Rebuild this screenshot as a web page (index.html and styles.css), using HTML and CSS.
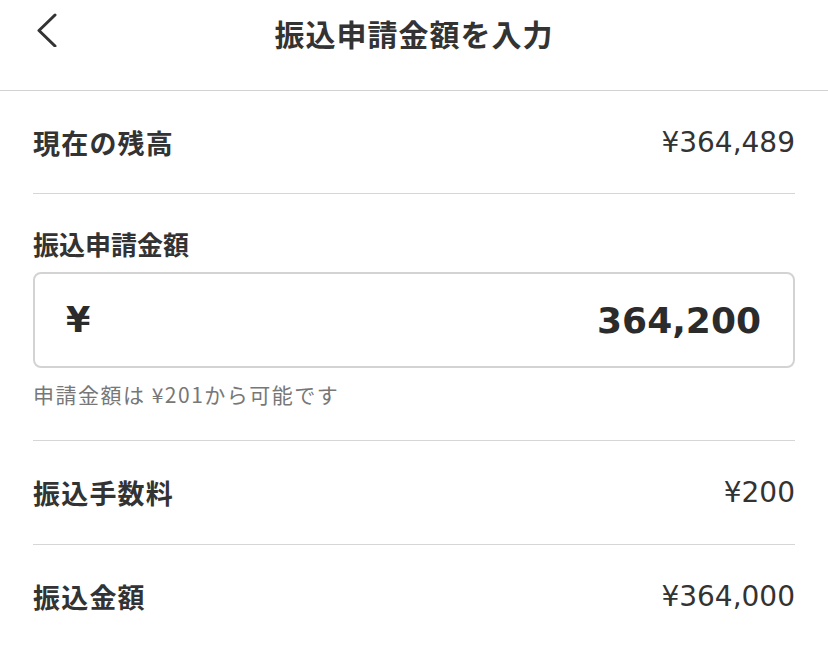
FILE: index.html
```html
<!DOCTYPE html>
<html lang="ja">
<head>
<meta charset="utf-8">
<title>振込申請金額を入力</title>
<link rel="stylesheet" href="styles.css">
</head>
<body>
<header class="topbar">
  <div class="back">
    <svg class="back-icon" width="24" height="34" viewBox="0 0 24 34" aria-hidden="true">
      <polyline points="20,2 4,17.5 20,33" fill="none" stroke="#333" stroke-width="3" stroke-linecap="round" stroke-linejoin="round"/>
    </svg>
  </div>
  <h1 class="title">振込申請金額を入力</h1>
  <div class="spacer"></div>
</header>
<main class="content">
  <div class="row">
    <span class="row-label">現在の残高</span>
    <span class="row-value">¥364,489</span>
  </div>
  <section class="amount">
    <div class="amount-label">振込申請金額</div>
    <div class="amount-box">
      <span class="amount-yen">¥</span>
      <span class="amount-num">364,200</span>
    </div>
    <div class="hint">申請金額は ¥201から可能です</div>
  </section>
  <div class="row">
    <span class="row-label">振込手数料</span>
    <span class="row-value">¥200</span>
  </div>
  <div class="row">
    <span class="row-label">振込金額</span>
    <span class="row-value">¥364,000</span>
  </div>
</main>
</body>
</html>
```

FILE: styles.css
```css
html, body {
  margin: 0;
  padding: 0;
  background: #fff;
}
body {
  width: 828px;
  color: #333;
  font-family: "Noto Sans CJK JP", sans-serif;
}
.topbar {
  height: 90px;
  border-bottom: 1px solid #d2d2d2;
  display: grid;
  grid-template-columns: 1fr auto 1fr;
  align-items: start;
  box-sizing: content-box;
}
.back {
  padding: 13px 0 0 35px;
}
.back-icon {
  display: block;
}
.title {
  margin: 13px 0 0 0;
  font-size: 30px;
  line-height: 40px;
  font-weight: 700;
  letter-spacing: 1px;
  color: #333;
}
.content {
  padding: 0 33px;
}
.row {
  height: 102px;
  display: flex;
  align-items: center;
  justify-content: space-between;
  border-bottom: 1px solid #d6d6d6;
}
.row:last-child {
  border-bottom: none;
}
.row + .row,
.amount + .row {
  height: 103px;
}
.row-label {
  font-size: 27px;
  font-weight: 700;
  letter-spacing: 1.2px;
  color: #333;
}
.row-value {
  font-family: "DejaVu Sans", sans-serif;
  font-size: 28px;
  color: #333;
}
.amount {
  padding: 32px 0 32px;
  border-bottom: 1px solid #d6d6d6;
}
.amount-label {
  font-size: 26px;
  line-height: 36px;
  font-weight: 700;
  color: #333;
}
.amount-box {
  margin-top: 10px;
  height: 96px;
  box-sizing: border-box;
  border: 2px solid #d3d3d3;
  border-radius: 8px;
  display: flex;
  align-items: center;
  justify-content: space-between;
  padding: 0 32px 0 31px;
  font-family: "DejaVu Sans", sans-serif;
  font-weight: 700;
  font-size: 36px;
  color: #2b2b2b;
}
.amount-yen {
  font-size: 35px;
}
.hint {
  margin-top: 12px;
  font-size: 21px;
  line-height: 28px;
  letter-spacing: 1.5px;
  color: #777;
}
```
